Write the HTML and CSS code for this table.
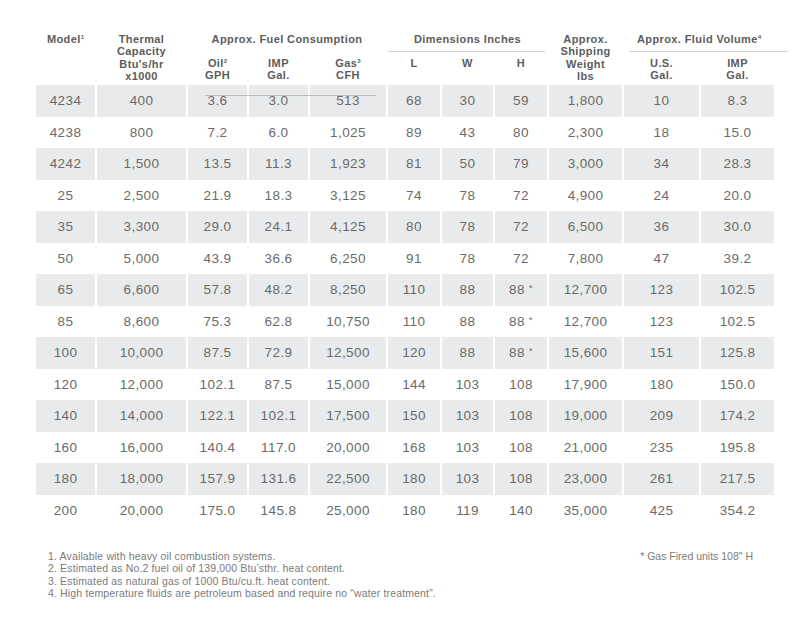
FILE: index.html
```html
<!DOCTYPE html>
<html>
<head>
<meta charset="utf-8">
<link rel="stylesheet" href="styles.css">
</head>
<body>
<div class="page">
  <div class="table-wrap">
    <table class="spec">
      <colgroup>
        <col class="c-model">
        <col class="c-thermal">
        <col class="c-oil">
        <col class="c-imp">
        <col class="c-gas">
        <col class="c-l">
        <col class="c-w">
        <col class="c-h">
        <col class="c-weight">
        <col class="c-us">
        <col class="c-impgal">
      </colgroup>
      <thead>
        <tr class="h1">
          <th rowspan="2" class="top">Model<sup>1</sup></th>
          <th rowspan="2" class="top">Thermal<br>Capacity<br>Btu's/hr<br>x1000</th>
          <th colspan="3" class="grp"><div class="grp-label">Approx. Fuel Consumption</div><div class="rule rule-none"></div></th>
          <th colspan="3" class="grp"><div class="grp-label">Dimensions Inches</div><div class="rule rule-dim"></div></th>
          <th rowspan="2" class="top">Approx.<br>Shipping<br>Weight<br>lbs</th>
          <th colspan="2" class="grp"><div class="grp-label">Approx. Fluid Volume<sup>4</sup></div><div class="rule rule-fluid"></div></th>
        </tr>
        <tr class="h2">
          <th>Oil<sup>2</sup><br>GPH</th>
          <th>IMP<br>Gal.</th>
          <th>Gas<sup>3</sup><br>CFH</th>
          <th>L</th>
          <th>W</th>
          <th>H</th>
          <th>U.S.<br>Gal.</th>
          <th>IMP<br>Gal.</th>
        </tr>
      </thead>
      <tbody>
        <tr class="alt"><td>4234</td><td>400</td><td>3.6</td><td>3.0</td><td>513</td><td>68</td><td>30</td><td>59</td><td>1,800</td><td>10</td><td>8.3</td></tr>
        <tr><td>4238</td><td>800</td><td>7.2</td><td>6.0</td><td>1,025</td><td>89</td><td>43</td><td>80</td><td>2,300</td><td>18</td><td>15.0</td></tr>
        <tr class="alt"><td>4242</td><td>1,500</td><td>13.5</td><td>11.3</td><td>1,923</td><td>81</td><td>50</td><td>79</td><td>3,000</td><td>34</td><td>28.3</td></tr>
        <tr><td>25</td><td>2,500</td><td>21.9</td><td>18.3</td><td>3,125</td><td>74</td><td>78</td><td>72</td><td>4,900</td><td>24</td><td>20.0</td></tr>
        <tr class="alt"><td>35</td><td>3,300</td><td>29.0</td><td>24.1</td><td>4,125</td><td>80</td><td>78</td><td>72</td><td>6,500</td><td>36</td><td>30.0</td></tr>
        <tr><td>50</td><td>5,000</td><td>43.9</td><td>36.6</td><td>6,250</td><td>91</td><td>78</td><td>72</td><td>7,800</td><td>47</td><td>39.2</td></tr>
        <tr class="alt"><td>65</td><td>6,600</td><td>57.8</td><td>48.2</td><td>8,250</td><td>110</td><td>88</td><td>88 <span class="ast">*</span></td><td>12,700</td><td>123</td><td>102.5</td></tr>
        <tr><td>85</td><td>8,600</td><td>75.3</td><td>62.8</td><td>10,750</td><td>110</td><td>88</td><td>88 <span class="ast">*</span></td><td>12,700</td><td>123</td><td>102.5</td></tr>
        <tr class="alt"><td>100</td><td>10,000</td><td>87.5</td><td>72.9</td><td>12,500</td><td>120</td><td>88</td><td>88 <span class="ast">*</span></td><td>15,600</td><td>151</td><td>125.8</td></tr>
        <tr><td>120</td><td>12,000</td><td>102.1</td><td>87.5</td><td>15,000</td><td>144</td><td>103</td><td>108</td><td>17,900</td><td>180</td><td>150.0</td></tr>
        <tr class="alt"><td>140</td><td>14,000</td><td>122.1</td><td>102.1</td><td>17,500</td><td>150</td><td>103</td><td>108</td><td>19,000</td><td>209</td><td>174.2</td></tr>
        <tr><td>160</td><td>16,000</td><td>140.4</td><td>117.0</td><td>20,000</td><td>168</td><td>103</td><td>108</td><td>21,000</td><td>235</td><td>195.8</td></tr>
        <tr class="alt"><td>180</td><td>18,000</td><td>157.9</td><td>131.6</td><td>22,500</td><td>180</td><td>103</td><td>108</td><td>23,000</td><td>261</td><td>217.5</td></tr>
        <tr><td>200</td><td>20,000</td><td>175.0</td><td>145.8</td><td>25,000</td><td>180</td><td>119</td><td>140</td><td>35,000</td><td>425</td><td>354.2</td></tr>
      </tbody>
    </table>
    <div class="stray-rule"></div>
  </div>
  <div class="notes">
    <ol class="footnotes">
      <li>1. Available with heavy oil combustion systems.</li>
      <li>2. Estimated as No.2 fuel oil of 139,000 Btu’sthr. heat content.</li>
      <li>3. Estimated as natural gas of 1000 Btu/cu.ft. heat content.</li>
      <li>4. High temperature fluids are petroleum based and require no “water treatment”.</li>
    </ol>
    <div class="gasnote">* Gas Fired units 108" H</div>
  </div>
</div>
</body>
</html>
```

FILE: styles.css
```css
html, body {
  margin: 0;
  padding: 0;
  background: #ffffff;
}

.page {
  width: 800px;
  height: 621px;
  padding-top: 33px;
  box-sizing: border-box;
  font-family: "Liberation Sans", Arial, Helvetica, sans-serif;
}

.table-wrap {
  position: relative;
  margin-left: 34px;
  width: 742px;
}

.spec {
  border-collapse: separate;
  border-spacing: 2px 0;
  table-layout: fixed;
  width: 742px;
  margin: 0;
}

.c-model { width: 59px; }
.c-thermal { width: 89px; }
.c-oil { width: 59px; }
.c-imp { width: 59px; }
.c-gas { width: 76px; }
.c-l { width: 52px; }
.c-w { width: 51px; }
.c-h { width: 52px; }
.c-weight { width: 73px; }
.c-us { width: 75px; }
.c-impgal { width: 73px; }

.spec th {
  font-size: 11px;
  line-height: 12.4px;
  font-weight: bold;
  color: #5c5c5c;
  text-align: center;
  padding: 0;
  letter-spacing: 0.4px;
}

.spec th sup {
  font-size: 6px;
  vertical-align: 4px;
  line-height: 0;
  letter-spacing: 0;
}

.spec th.top {
  vertical-align: top;
}

.spec tr.h1 th.grp {
  vertical-align: top;
  height: 24px;
}

.grp-label {
  height: 12.4px;
}

.rule {
  height: 1px;
  background: #cfcfcf;
  margin-top: 6px;
}

.rule-none {
  background: transparent;
}

.rule-dim {
  margin-right: 2px;
}

.rule-fluid {
  margin-left: 6px;
  margin-right: -14px;
}

.spec tr.h2 th {
  vertical-align: top;
  height: 28px;
}

.spec td {
  height: 31.5px;
  padding: 0;
  text-align: center;
  vertical-align: middle;
  font-size: 13.5px;
  color: #6a6a6a;
  letter-spacing: 0.4px;
}

.spec tr.alt td {
  background: #e9eaec;
}

.ast {
  font-size: 9px;
  vertical-align: 3px;
}

.stray-rule {
  position: absolute;
  left: 171px;
  top: 62px;
  width: 171px;
  height: 1px;
  background: #bdbdbd;
}

.notes {
  display: flex;
  justify-content: space-between;
  margin-top: 24px;
  padding-left: 48px;
  padding-right: 47px;
  font-size: 10.5px;
  line-height: 12.3px;
  color: #7a7a7a;
}

.footnotes {
  list-style: none;
  margin: 0;
  padding: 0;
  letter-spacing: 0.15px;
}
```
